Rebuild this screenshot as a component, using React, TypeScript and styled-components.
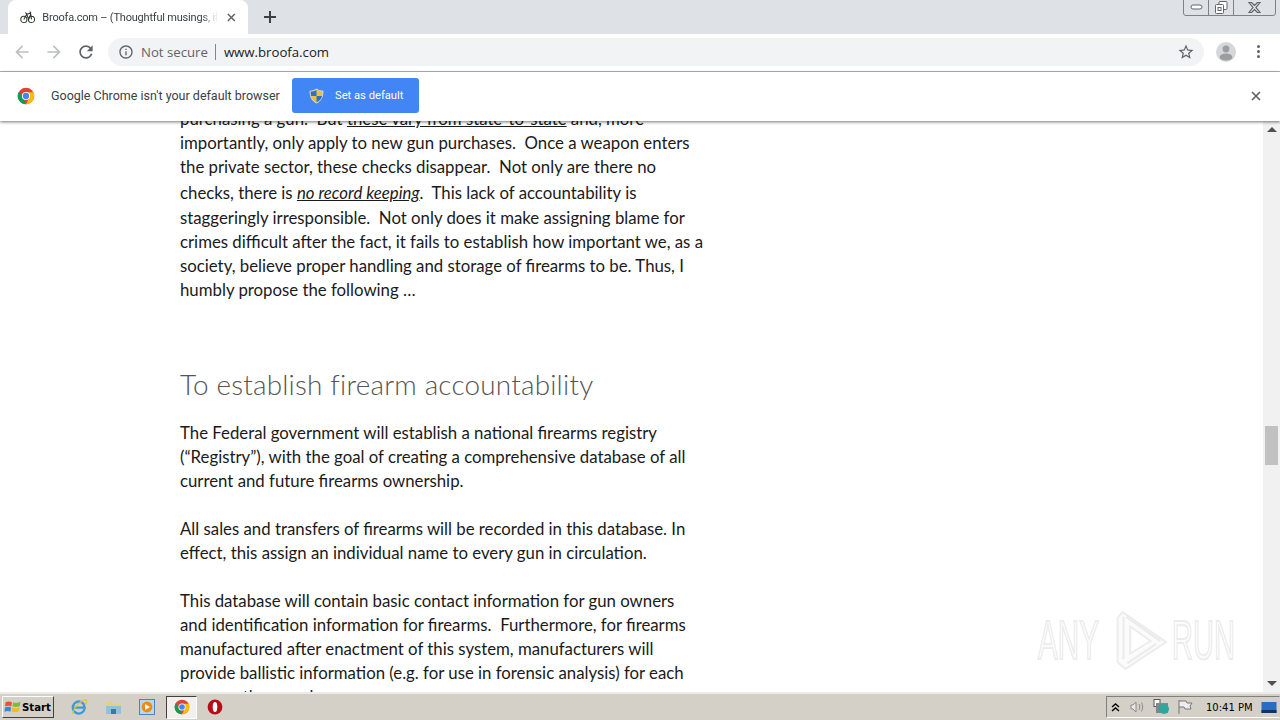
import React from 'react';
import styled, { createGlobalStyle } from 'styled-components';

const GlobalStyle = createGlobalStyle`
  html, body { margin: 0; padding: 0; height: 100%; overflow: hidden; background: #fff; }
  #root { height: 100%; }
`;

const Window = styled.div`
  width: 1280px;
  height: 720px;
  display: flex;
  flex-direction: column;
  overflow: hidden;
  position: relative;
  font-family: Roboto, 'Liberation Sans', sans-serif;
`;

/* tab strip */
const TabStrip = styled.div`
  height: 34px;
  flex: none;
  background: #dee1e6;
  display: flex;
  padding-left: 8px;
  position: relative;
`;

const Tab = styled.div`
  width: 240px;
  height: 34px;
  background: #fff;
  border-radius: 8px 8px 0 0;
  display: flex;
  align-items: center;
  padding: 0 12px;
  box-sizing: border-box;
  gap: 7px;
`;

const TabTitle = styled.span`
  font-size: 11px;
  letter-spacing: -0.2px;
  color: #3c4043;
  white-space: nowrap;
  overflow: hidden;
  width: 178px;
  flex: none;
  mask-image: linear-gradient(to right, #000 160px, transparent 176px);
`;

const NewTab = styled.div`
  margin-left: 10px;
  width: 24px;
  height: 34px;
  display: flex;
  align-items: center;
  justify-content: center;
`;

const WinControls = styled.div`
  position: absolute;
  right: 4px;
  top: -1px;
  height: 17px;
  width: 93px;
  box-sizing: border-box;
  border: 1px solid #7d8288;
  border-radius: 0 0 3px 3px;
  display: flex;
`;

const WinButton = styled.div<{ $w: number; $sep?: boolean }>`
  width: ${p => p.$w}px;
  display: flex;
  align-items: center;
  justify-content: center;
  box-sizing: border-box;
  border-right: ${p => (p.$sep ? '1px solid #7d8288' : 'none')};
`;

/* toolbar */
const Toolbar = styled.div`
  height: 38px;
  flex: none;
  box-sizing: border-box;
  background: #fff;
  border-bottom: 1px solid #b4b6b8;
  display: flex;
  align-items: center;
  padding: 0 0 2px 6px;
`;

const NavButton = styled.div`
  width: 32px;
  height: 28px;
  display: flex;
  align-items: center;
  justify-content: center;
`;

const Omnibox = styled.div`
  margin-left: 6px;
  width: 1096px;
  height: 28px;
  flex: none;
  background: #f1f3f4;
  border-radius: 14px;
  display: flex;
  align-items: center;
  padding: 0 9px 0 10px;
  box-sizing: border-box;
`;

const NotSecure = styled.span`
  margin-left: 7px;
  font-family: 'Open Sans', sans-serif;
  font-size: 13.2px;
  color: #5f6368;
  padding-right: 7px;
  border-right: 1px solid #80868b;
  line-height: 16px;
`;

const Url = styled.span`
  margin-left: 8px;
  font-family: 'Open Sans', sans-serif;
  font-size: 13.2px;
  color: #202124;
  flex: 1;
`;

const Avatar = styled.div`
  margin-left: 12px;
  width: 20px;
  height: 20px;
  border-radius: 50%;
  background: #d5d7da;
  overflow: hidden;
  flex: none;
`;

const MenuDots = styled.div`
  margin-left: 21px;
  display: flex;
  flex-direction: column;
  gap: 2px;
  i { width: 3px; height: 3px; border-radius: 50%; background: #5f6368; display: block; }
`;

/* default browser infobar */
const InfoBar = styled.div`
  height: 49px;
  flex: none;
  box-sizing: border-box;
  background: #fff;
  display: flex;
  align-items: center;
  padding: 0 19px 2px 17px;
  position: relative;
  z-index: 2;
  box-shadow: 0 1px 3px rgba(0, 0, 0, 0.55);
`;

const InfoText = styled.span`
  margin-left: 16px;
  font-size: 12.5px;
  color: #3c4043;
  white-space: nowrap;
  width: 241px;
  flex: none;
`;

const DefaultButton = styled.div`
  width: 127px;
  height: 35px;
  background: #4285f4;
  border-radius: 3px;
  display: flex;
  align-items: center;
  padding-left: 17px;
  box-sizing: border-box;
  gap: 11px;
  color: #fff;
  font-size: 11.2px;
  flex: none;
`;

const CloseInfo = styled.div`
  margin-left: auto;
  display: flex;
`;

/* page */
const PageArea = styled.div`
  flex: 1;
  min-height: 0;
  display: flex;
  background: #fff;
`;

const Viewport = styled.div`
  flex: 1;
  overflow: hidden;
  padding-left: 180px;
`;

const Article = styled.div`
  margin-top: -15px;
  font-family: 'Lato', 'Liberation Sans', sans-serif;
  font-size: 16.8px;
  color: #1a1a1a;
`;

const Line = styled.div<{ $h?: number }>`
  height: ${p => p.$h ?? 24}px;
  line-height: ${p => p.$h ?? 24}px;
  white-space: pre;
  em { font-style: italic; text-decoration: underline; }
  u { text-decoration: underline; }
`;

const Para = styled.div`
  margin-bottom: 24px;
`;

const Heading = styled.h2`
  margin: 64px 0 19px;
  font-weight: 300;
  font-size: 27.9px;
  line-height: 36px;
  letter-spacing: 0.2px;
  color: #555;
`;

const Scrollbar = styled.div`
  width: 17px;
  flex: none;
  background: #f1f1f1;
  display: flex;
  flex-direction: column;
  align-items: center;
  justify-content: space-between;
  position: relative;
`;

const ScrollArrow = styled.div<{ $up?: boolean }>`
  height: 17px;
  width: 17px;
  display: flex;
  align-items: center;
  justify-content: center;
  &::before {
    content: '';
    border-left: 5px solid transparent;
    border-right: 5px solid transparent;
    ${p => (p.$up ? 'border-bottom: 5px solid #505050;' : 'border-top: 5px solid #505050;')}
  }
`;

const ScrollThumb = styled.div`
  position: absolute;
  left: 2px;
  top: 305px;
  width: 13px;
  height: 39px;
  background: #c1c1c1;
`;

const Watermark = styled.div`
  position: absolute;
  left: 1038px;
  top: 608px;
  display: flex;
  align-items: center;
  z-index: 3;
  pointer-events: none;
`;

const WatermarkWord = styled.span<{ $scale: number }>`
  width: 64px;
  display: block;
  font-family: 'Liberation Sans', sans-serif;
  font-size: 55px;
  transform: scaleX(${p => p.$scale});
  transform-origin: left center;
  line-height: 64px;
  color: #fbfbfb;
  -webkit-text-stroke: 2px #ececec;
  white-space: nowrap;
`;

const WatermarkMark = styled.svg`
  margin: 0 4px 0 6px;
  flex: none;
`;

/* taskbar */
const Taskbar = styled.div`
  height: 28px;
  flex: none;
  box-sizing: border-box;
  background: #d4d0c8;
  border-top: 2px solid #ecebe6;
  display: flex;
  align-items: center;
  padding-left: 2px;
`;

const StartButton = styled.div`
  width: 52px;
  height: 22px;
  box-sizing: border-box;
  border: 1px solid;
  border-color: #fff #404040 #404040 #fff;
  display: flex;
  align-items: center;
  padding-left: 1px;
  font-family: 'DejaVu Sans', sans-serif;
  font-weight: 700;
  font-size: 10.2px;
  color: #000;
`;

const QuickLaunch = styled.div`
  display: flex;
  align-items: center;
  margin-left: 8px;
`;

const TaskIcon = styled.div<{ $active?: boolean }>`
  width: 34px;
  height: 23px;
  box-sizing: border-box;
  display: flex;
  align-items: center;
  justify-content: center;
  ${p =>
    p.$active
      ? 'background: #f2f0ec; border: 1px solid; border-color: #404040 #fff #fff #404040; width: 31px; margin: 0 1px 0 2px;'
      : ''}
`;

const Tray = styled.div`
  margin-left: auto;
  width: 174px;
  height: 22px;
  box-sizing: border-box;
  border: 1px solid;
  border-color: #808080 transparent #fff #808080;
  display: flex;
  align-items: center;
  padding-left: 4px;
`;

const Clock = styled.span`
  font-family: 'DejaVu Sans', 'Liberation Sans', sans-serif;
  font-size: 10px;
  color: #000;
  margin-left: 13px;
  white-space: nowrap;
`;

const ChromeLogo = ({ size = 18 }: { size?: number }) => (
  <svg width={size} height={size} viewBox="0 0 24 24">
    <circle cx="12" cy="12" r="11" fill="#db4437" />
    <path d="M12 7 H22 A11 11 0 0 1 23 12 A11 11 0 0 1 12 23 L17 13Z" fill="#fbbc05" />
    <path d="M2.6 6.2 L8 15 L12 23 A11 11 0 0 1 2.6 6.2Z" fill="#0f9d58" />
    <circle cx="12" cy="12" r="5.4" fill="#fff" />
    <circle cx="12" cy="12" r="4.2" fill="#4285f4" />
  </svg>
);

const Shield = () => (
  <svg width="15" height="16" viewBox="0 0 15 16">
    <path d="M7.5 1 C9.5 2.5 11.5 3 14 3 C14 9 12 13 7.5 15 C3 13 1 9 1 3 C3.5 3 5.5 2.5 7.5 1Z" fill="#e8c23a" stroke="#c9d6ea" strokeWidth="1" />
    <path d="M7.5 2 V8 H2 C1.8 6.5 1.8 5 1.8 3.6 C3.8 3.5 5.8 3 7.5 2Z" fill="#2f6fc4" />
    <path d="M7.5 8 H13 C12.5 10.8 10.5 13 7.5 14.2Z" fill="#2f6fc4" />
  </svg>
);

const Bicycle = () => (
  <svg width="16" height="16" viewBox="0 0 16 16" fill="none" stroke="#2f3a30" strokeWidth="1.1">
    <circle cx="4" cy="10.5" r="3.2" />
    <circle cx="12" cy="10.5" r="3.2" />
    <path d="M4 10.5 L7 5 L11 4 L12 10.5 M7 5 L9 10.5 L11 5.5 M5.5 3.5 L7.5 5 M10 2.5 L11.5 3.5" />
  </svg>
);

const ArrowIcon = ({ flip }: { flip?: boolean }) => (
  <svg width="20" height="20" viewBox="0 0 24 24" fill="#bcc0c4" style={flip ? { transform: 'scaleX(-1)' } : undefined}>
    <path d="M20 11H7.83l5.59-5.59L12 4l-8 8 8 8 1.41-1.41L7.83 13H20v-2z" />
  </svg>
);

const CrossIcon = ({ size, color }: { size: number; color: string }) => (
  <svg width={size} height={size} viewBox="0 0 10 10" stroke={color} strokeWidth="1.7" fill="none">
    <path d="M1 1 L9 9 M9 1 L1 9" />
  </svg>
);

const firstPara: [React.ReactNode, number][] = [
  [<>purchasing a gun.  But <u>these vary from state-to-state</u> and, more</>, 25],
  ['importantly, only apply to new gun purchases.  Once a weapon enters', 24],
  ['the private sector, these checks disappear.  Not only are there no', 24],
  [<>checks, there is <em>no record keeping</em>.  This lack of accountability is</>, 27],
  ['staggeringly irresponsible.  Not only does it make assigning blame for', 24],
  ['crimes difficult after the fact, it fails to establish how important we, as a', 24],
  ['society, believe proper handling and storage of firearms to be. Thus, I', 24],
  ['humbly propose the following …', 24],
];

const paragraphs = [
  [
    'The Federal government will establish a national firearms registry',
    '(“Registry”), with the goal of creating a comprehensive database of all',
    'current and future firearms ownership.',
  ],
  [
    'All sales and transfers of firearms will be recorded in this database. In',
    'effect, this assign an individual name to every gun in circulation.',
  ],
  [
    'This database will contain basic contact information for gun owners',
    'and identification information for firearms.  Furthermore, for firearms',
    'manufactured after enactment of this system, manufacturers will',
    'provide ballistic information (e.g. for use in forensic analysis) for each',
    'weapon they produce.',
  ],
];

export default function App() {
  return (
    <>
      <GlobalStyle />
      <Window>
        <TabStrip>
          <Tab>
            <Bicycle />
            <TabTitle>Broofa.com – (Thoughtful musings, if you ask me)</TabTitle>
            <CrossIcon size={9} color="#5f6368" />
          </Tab>
          <NewTab>
            <svg width="12" height="12" viewBox="0 0 12 12" stroke="#3c4043" strokeWidth="2">
              <path d="M6 0 V12 M0 6 H12" />
            </svg>
          </NewTab>
          <WinControls>
            <WinButton $w={25} $sep>
              <svg width="13" height="7" viewBox="0 0 13 7" fill="#fff" stroke="#60656b">
                <rect x="1" y="1" width="11" height="4" rx="2" />
              </svg>
            </WinButton>
            <WinButton $w={25} $sep>
              <svg width="13" height="13" viewBox="0 0 13 13" fill="#fff" stroke="#60656b">
                <rect x="4" y="0.5" width="8" height="8" rx="1" />
                <rect x="0.5" y="3.5" width="8" height="9" rx="1" />
                <rect x="3" y="6.5" width="3" height="3" />
              </svg>
            </WinButton>
            <WinButton $w={41}>
              <svg width="13" height="11" viewBox="0 0 13 11" fill="none" stroke="#60656b" strokeWidth="1.2">
                <path d="M1 0.5 H3.5 L6.5 3.5 L9.5 0.5 H12 L8 5.5 L12 10.5 H9.5 L6.5 7.5 L3.5 10.5 H1 L5 5.5Z" />
              </svg>
            </WinButton>
          </WinControls>
        </TabStrip>

        <Toolbar>
          <NavButton><ArrowIcon /></NavButton>
          <NavButton><ArrowIcon flip /></NavButton>
          <NavButton>
            <svg width="20" height="20" viewBox="0 0 24 24" fill="#5f6368">
              <path d="M17.65 6.35C16.2 4.9 14.21 4 12 4c-4.42 0-7.99 3.58-7.99 8s3.57 8 7.99 8c3.73 0 6.84-2.55 7.73-6h-2.08c-.82 2.33-3.04 4-5.65 4-3.31 0-6-2.69-6-6s2.69-6 6-6c1.66 0 3.14.69 4.22 1.78L13 11h7V4l-2.35 2.35z" />
            </svg>
          </NavButton>
          <Omnibox>
            <svg width="16" height="16" viewBox="0 0 24 24" fill="#5f6368">
              <path d="M11 7h2v2h-2zm0 4h2v6h-2zm1-9C6.48 2 2 6.48 2 12s4.48 10 10 10 10-4.48 10-10S17.52 2 12 2zm0 18c-4.41 0-8-3.59-8-8s3.59-8 8-8 8 3.59 8 8-3.59 8-8 8z" />
            </svg>
            <NotSecure>Not secure</NotSecure>
            <Url>www.broofa.com</Url>
            <svg width="18" height="18" viewBox="0 0 24 24" fill="#5f6368">
              <path d="M22 9.24l-7.19-.62L12 2 9.19 8.63 2 9.24l5.46 4.73L5.82 21 12 17.27 18.18 21l-1.63-7.03L22 9.24zM12 15.4l-3.76 2.27 1-4.28-3.32-2.88 4.38-.38L12 6.1l1.71 4.04 4.38.38-3.32 2.88 1 4.28L12 15.4z" />
            </svg>
          </Omnibox>
          <Avatar>
            <svg width="20" height="20" viewBox="0 0 20 20" fill="#9a9da1">
              <circle cx="10" cy="7" r="3.4" />
              <ellipse cx="10" cy="15" rx="6.4" ry="3.6" />
            </svg>
          </Avatar>
          <MenuDots><i /><i /><i /></MenuDots>
        </Toolbar>

        <InfoBar>
          <ChromeLogo />
          <InfoText>Google Chrome isn't your default browser</InfoText>
          <DefaultButton>
            <Shield />
            <span>Set as default</span>
          </DefaultButton>
          <CloseInfo><CrossIcon size={10} color="#5f6368" /></CloseInfo>
        </InfoBar>

        <PageArea>
          <Viewport>
            <Article>
              <Para>
                {firstPara.map(([text, h], i) => (
                  <Line key={i} $h={h}>{text}</Line>
                ))}
              </Para>
              <Heading>To establish firearm accountability</Heading>
              {paragraphs.map((lines, i) => (
                <Para key={i}>
                  {lines.map(l => <Line key={l}>{l}</Line>)}
                </Para>
              ))}
            </Article>
          </Viewport>
          <Scrollbar>
            <ScrollArrow $up />
            <ScrollThumb />
            <ScrollArrow />
          </Scrollbar>
        </PageArea>

        <Taskbar>
          <StartButton>
            <svg width="18" height="16" viewBox="0 0 16 15">
              <path d="M1 3 C3 2 5 2 7 3 L6.4 7 C4.6 6 3 6 0.6 7Z" fill="#e8552a" />
              <path d="M8 3 C10 4 12 4 15 2.6 L14.4 6.6 C12 7.6 10 7.6 7.6 7Z" fill="#7fba3a" />
              <path d="M0.5 8 C3 7 4.6 7 6.2 8 L5.6 12 C4 11 2.4 11 0 12Z" fill="#3a85d8" />
              <path d="M7.4 8 C10 9 12 9 14.2 7.6 L13.6 11.6 C11 12.8 9 12.6 6.8 12Z" fill="#f2b92c" />
            </svg>
            Start
          </StartButton>
          <QuickLaunch>
            <TaskIcon>
              <svg width="18" height="18" viewBox="0 0 18 18" fill="none">
                <path d="M14.6 11 A6 6 0 1 1 13.6 6 L14.6 9.6 H4.5" stroke="#3c9ad8" strokeWidth="2.4" />
                <path d="M2 16 C5 8 11 2 16 1.6 C17.5 3 16.5 5 15 7" stroke="#e8c23a" strokeWidth="1.2" />
              </svg>
            </TaskIcon>
            <TaskIcon>
              <svg width="17" height="16" viewBox="0 0 17 16">
                <path d="M1 3 H7 L8 5 H16 V14 H1Z" fill="#e8cf7a" />
                <rect x="1" y="7" width="15" height="8" fill="#8fc3dc" />
                <rect x="6" y="10" width="5" height="5" fill="#3a78a8" />
              </svg>
            </TaskIcon>
            <TaskIcon>
              <svg width="16" height="16" viewBox="0 0 16 16">
                <rect x="0.5" y="0.5" width="15" height="15" fill="#bcd5ee" stroke="#4a84bf" />
                <circle cx="8" cy="8" r="5.4" fill="#ee8a1c" />
                <path d="M6 5 L11 8 L6 11Z" fill="#fff" />
              </svg>
            </TaskIcon>
            <TaskIcon $active><ChromeLogo size={16} /></TaskIcon>
            <TaskIcon>
              <svg width="16" height="16" viewBox="0 0 16 16">
                <circle cx="8" cy="8" r="7.4" fill="#b80d16" />
                <ellipse cx="8" cy="8" rx="2.3" ry="5" fill="#fff" />
              </svg>
            </TaskIcon>
          </QuickLaunch>
          <Tray>
            <svg width="9" height="9" viewBox="0 0 9 9" fill="none" stroke="#000" strokeWidth="1.4">
              <path d="M1 4 L4.5 1 L8 4 M1 8 L4.5 5 L8 8" />
            </svg>
            <svg style={{ marginLeft: 10 }} width="15" height="14" viewBox="0 0 15 14" fill="none" stroke="#8a8a8a">
              <path d="M1 5 H3 L6 2 V12 L3 9 H1Z" fill="#e8e8e8" />
              <path d="M9 4 C10 6 10 8 9 10 M11.5 2.5 C13 5 13 9 11.5 11.5" />
            </svg>
            <svg style={{ marginLeft: 8 }} width="17" height="16" viewBox="0 0 17 16">
              <rect x="1" y="0.5" width="6" height="7" fill="#fff" stroke="#555" />
              <rect x="3" y="4" width="12" height="10" fill="#7a8a8a" />
              <circle cx="11" cy="10" r="5" fill="#2ea89c" />
            </svg>
            <svg style={{ marginLeft: 7 }} width="16" height="16" viewBox="0 0 16 16" fill="#eee" stroke="#777">
              <path d="M2 1 V15 M2 2 H9 L10 4 H15 L13 7 L14 10 H8 L7 8 H2" />
            </svg>
            <Clock>10:41 PM</Clock>
            <svg style={{ marginLeft: 8 }} width="16" height="15" viewBox="0 0 15 15">
              <rect width="15" height="11" y="2" fill="#2a6cc0" />
              <rect width="15" height="3" y="10" fill="#14345c" />
            </svg>
          </Tray>
        </Taskbar>

        <Watermark>
          <WatermarkWord $scale={0.54}>ANY</WatermarkWord>
          <WatermarkMark width="60" height="64" viewBox="0 0 62 64" fill="none" stroke="#ececec" strokeWidth="2">
            <path d="M15 3 L60 34 L18 62 L10 55 V9Z" fill="#fbfbfb" />
            <path d="M19 8 L54 33 M16 8 V52 M50 36 L20 56" strokeWidth="2.4" />
            <path d="M23 18 L44 33 L23 46Z" fill="#fff" />
          </WatermarkMark>
          <WatermarkWord $scale={0.53}>RUN</WatermarkWord>
        </Watermark>
      </Window>
    </>
  );
}
